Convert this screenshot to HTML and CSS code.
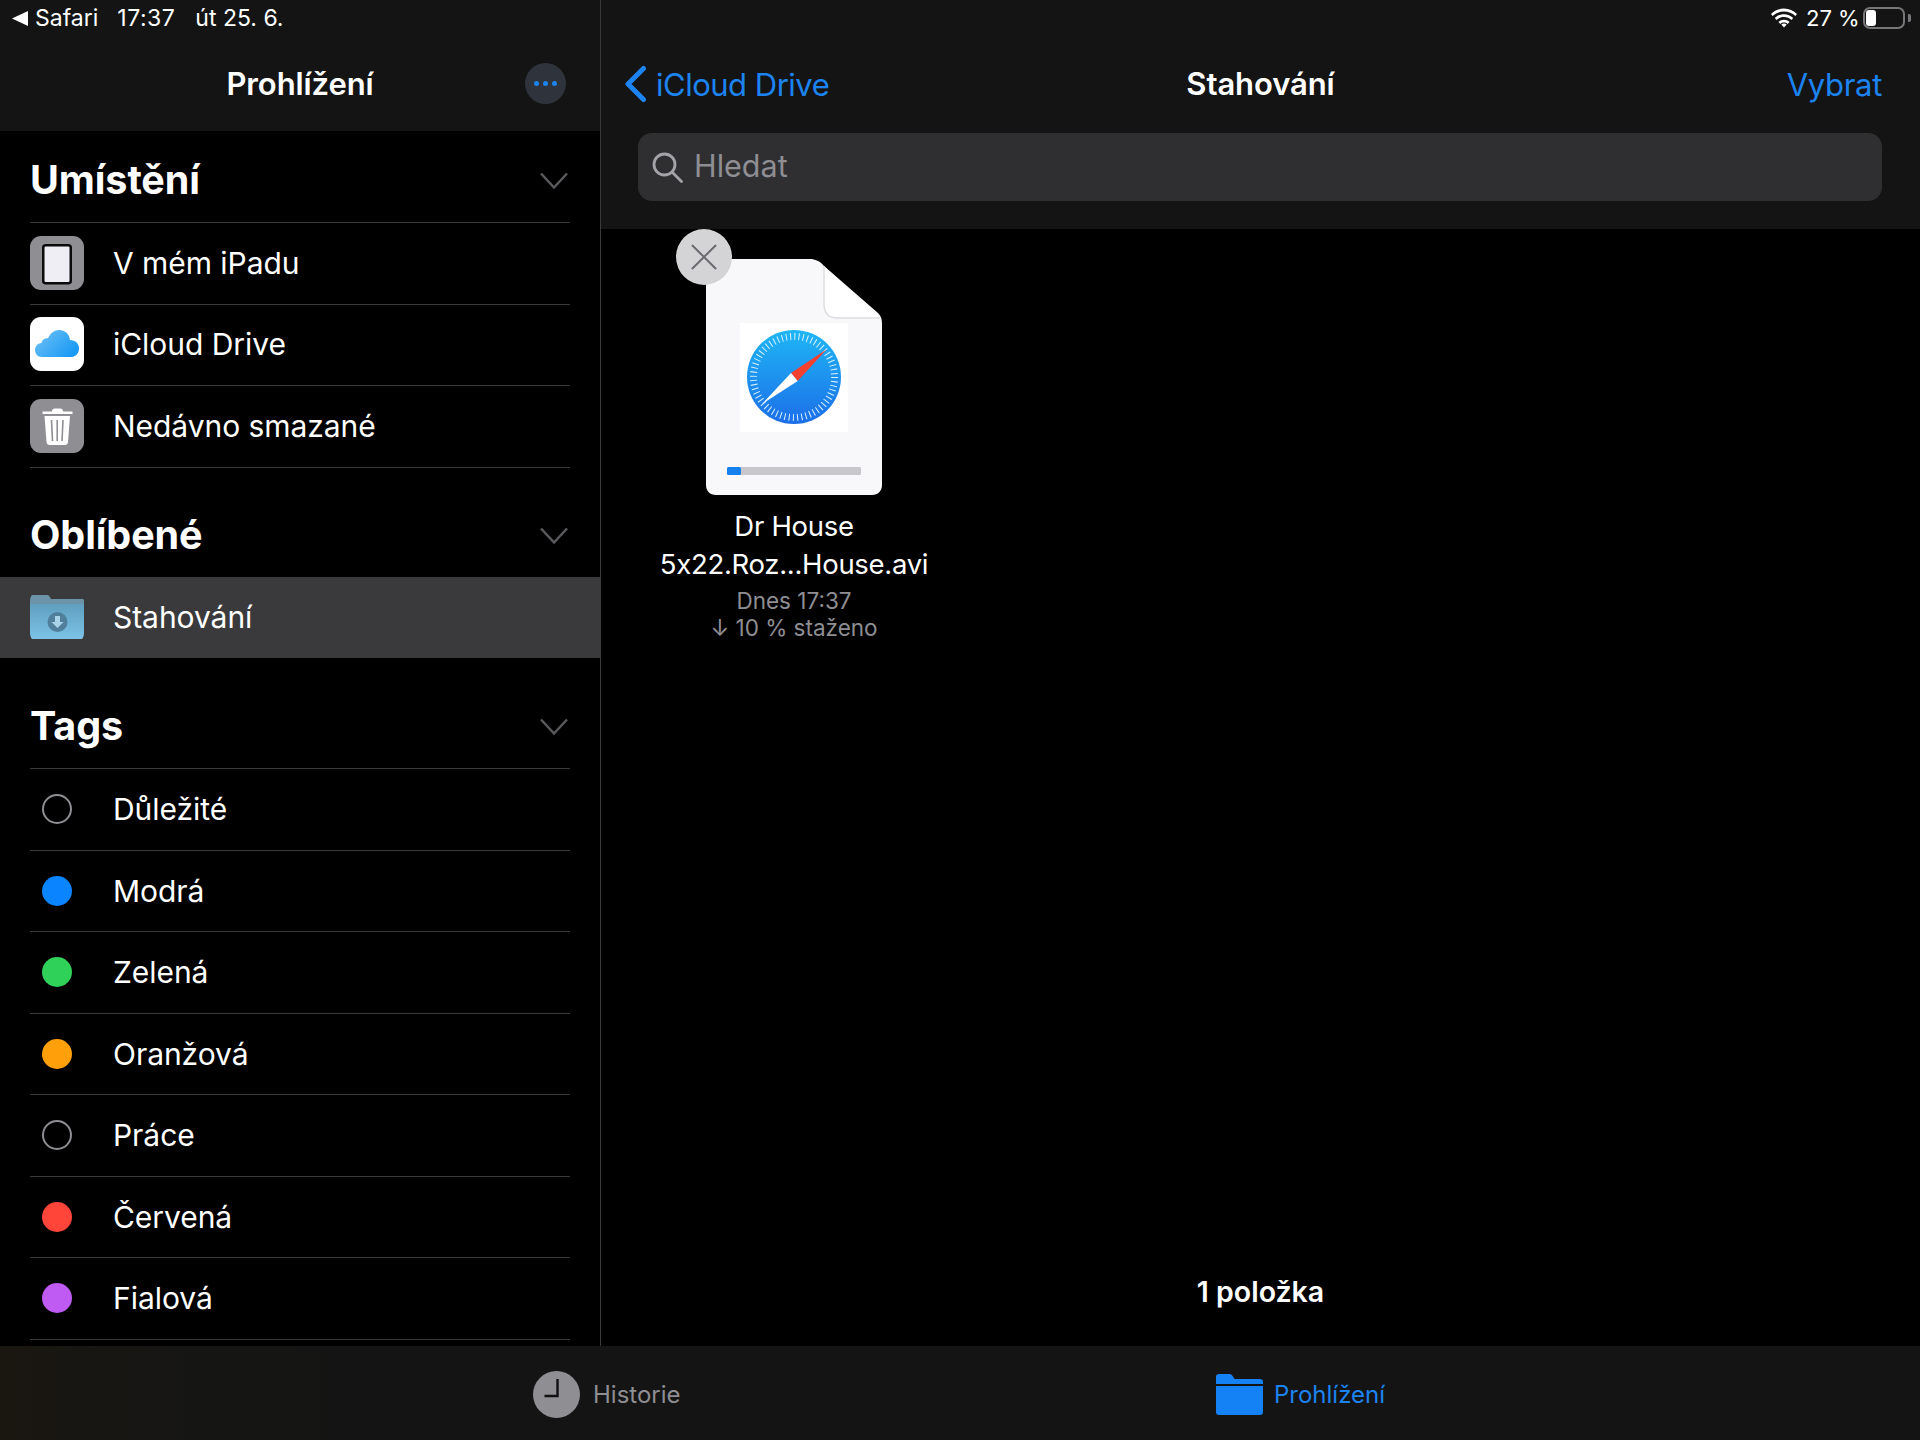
FILE: index.html
```html
<!DOCTYPE html>
<html lang="cs">
<head>
<meta charset="utf-8">
<title>Soubory</title>
<link rel="stylesheet" href="styles.css">
</head>
<body>
<div class="app">
  <div class="panes">
    <aside class="sidebar">
      <header class="side-head">
        <div class="status status-left">
          <svg class="back-tri" viewBox="0 0 16 15"><path d="M16 0v15L0 7.500z"/></svg>
          <span>Safari</span><span class="st-time">17:37</span><span class="st-date">út 25. 6.</span>
        </div>
        <div class="side-nav">
          <h1 class="nav-title">Prohlížení</h1>
          <button class="more"><i></i><i></i><i></i></button>
        </div>
      </header>

      <section class="group">
        <div class="group-head"><h2>Umístění</h2>
          <svg class="caret" viewBox="0 0 28 18"><path d="M1 1.500l13 14 13-14"/></svg></div>
        <div class="row row-place">
          <span class="ic ic-gray"><svg viewBox="0 0 54 54"><rect x="13.250" y="9.250" width="27.500" height="38" rx="2.500" fill="#eeeef4" stroke="#0a0a0a" stroke-width="2.500"/></svg></span>
          <span>V mém iPadu</span></div>
        <div class="row row-place">
          <span class="ic ic-white"><svg viewBox="0 0 54 54"><defs><linearGradient id="cl" x1="0" y1="0" x2="1" y2="0.6"><stop offset="0" stop-color="#74c3f5"/><stop offset="1" stop-color="#1b9bf5"/></linearGradient></defs><path d="M12 40c-4.600 0-7-3.400-7-7 0-3.800 2.800-6.800 6.500-7 .6-3.400 3.500-5.300 6.500-4.700C20.300 16 24.500 13 29 13c6 0 10.500 4.300 11 10 5 .1 9 3.300 9 8.400 0 5-3.600 8.600-8.500 8.600z" fill="url(#cl)"/></svg></span>
          <span>iCloud Drive</span></div>
        <div class="row row-place">
          <span class="ic ic-gray"><svg viewBox="0 0 54 54"><path d="M22 12.500c0-2 1-3 3-3h5c2 0 3 1 3 3h9.500v2.500h-30v-2.500z" fill="#fff"/><path d="M14.500 17h25.500l-2 26c-.2 2-1.300 3-3 3H19.500c-1.700 0-2.800-1-3-3z" fill="#fff"/><path d="M21.500 21l1 21M27.200 21v21M33 21l-1 21" stroke="#8e8e93" stroke-width="1.600"/></svg></span>
          <span>Nedávno smazané</span></div>
      </section>

      <section class="group">
        <div class="group-head"><h2>Oblíbené</h2>
          <svg class="caret" viewBox="0 0 28 18"><path d="M1 1.500l13 14 13-14"/></svg></div>
        <div class="row row-active">
          <span class="ic"><svg viewBox="0 0 54 54"><defs><linearGradient id="fd" x1="0" y1="0" x2="0" y2="1"><stop offset="0" stop-color="#5f9fbf"/><stop offset="1" stop-color="#7cc3e6"/></linearGradient></defs><path d="M0 7c0-1 .6-2 2-2h15c1 0 1.800 .4 2.500 1.500L21 9h31.500c1 0 1.500 .6 1.500 1.500V14H0z" fill="#6d93a8"/><path d="M0 14h54v32c0 1.200-.8 3-2 3H2c-1.200 0-2-1.800-2-3z" fill="url(#fd)"/><circle cx="27.500" cy="32" r="10" fill="#4f7f9b"/><path d="M25 26h5v6h3.500l-6 6-6-6H25z" fill="#a9d3e8"/></svg></span>
          <span>Stahování</span></div>
      </section>

      <section class="group">
        <div class="group-head"><h2>Tags</h2>
          <svg class="caret" viewBox="0 0 28 18"><path d="M1 1.500l13 14 13-14"/></svg></div>
        <div class="row"><span class="dot-wrap"><i class="dot dot-empty"></i></span><span>Důležité</span></div>
        <div class="row"><span class="dot-wrap"><i class="dot dot-blue"></i></span><span>Modrá</span></div>
        <div class="row"><span class="dot-wrap"><i class="dot dot-green"></i></span><span>Zelená</span></div>
        <div class="row"><span class="dot-wrap"><i class="dot dot-orange"></i></span><span>Oranžová</span></div>
        <div class="row"><span class="dot-wrap"><i class="dot dot-empty"></i></span><span>Práce</span></div>
        <div class="row"><span class="dot-wrap"><i class="dot dot-red"></i></span><span>Červená</span></div>
        <div class="row"><span class="dot-wrap"><i class="dot dot-purple"></i></span><span>Fialová</span></div>
      </section>
    </aside>

    <main class="main">
      <header class="main-head">
        <div class="status status-right">
          <svg class="wifi" viewBox="0 0 26 20"><path d="M13 3.500c4.400 0 8.400 1.700 11.300 4.500l1.700-2C22.600 2.700 18 .6 13 .6S3.400 2.700 0 6l1.700 2C4.600 5.200 8.600 3.500 13 3.500z"/><path d="M13 9c2.900 0 5.500 1.100 7.500 3l1.700-2C19.800 7.700 16.600 6.200 13 6.200S6.200 7.700 3.800 10l1.700 2c2-1.900 4.600-3 7.500-3z"/><path d="M13 14.500c1.400 0 2.700.5 3.700 1.400l1.800-2c-1.500-1.300-3.400-2.100-5.500-2.100s-4 .8-5.500 2.100l1.800 2c1-.9 2.300-1.400 3.700-1.400z"/><path d="M13 19.500l2.700-2.900c-.7-.6-1.700-1-2.700-1s-2 .4-2.700 1z"/></svg>
          <span class="pct">27 %</span>
          <span class="battery"><i></i></span><span class="nub"></span>
        </div>
        <div class="main-nav">
          <a class="back"><svg class="back-chev" viewBox="0 0 23 38"><path d="M19.500 3.500L4 19l15.500 15.500" /></svg><span>iCloud Drive</span></a>
          <h1 class="nav-title">Stahování</h1>
          <a class="select">Vybrat</a>
        </div>
        <div class="search">
          <svg class="search-ic" viewBox="0 0 31 31"><circle cx="12.500" cy="12.500" r="10.500"/><path d="M20.500 20.500l9 9"/></svg>
          <span class="search-text">Hledat</span>
        </div>
      </header>

      <div class="content">
        <div class="file">
          <div class="thumb">
            <svg class="page" viewBox="0 0 176 236">
              <path d="M10 0H104c5 0 10 2 14 7L172 54c3 3 4 6 4 11V226c0 6-4 10-10 10H10c-6 0-10-4-10-10V10C0 4 4 0 10 0z" fill="#f8f8fa"/>
              <path d="M118 7V45c0 9 5 14 14 14H174z" fill="#fff"/>
              <path d="M118 7V45c0 9 5 14 14 14H174" fill="none" stroke="#dedee2" stroke-width="1.500"/>
              <rect x="34" y="64" width="108" height="109" fill="#fff"/>
              <defs><linearGradient id="sf" x1="0" y1="0" x2="0" y2="1"><stop offset="0" stop-color="#1fb6f5"/><stop offset="1" stop-color="#1c6fe8"/></linearGradient></defs>
              <circle cx="88" cy="118" r="47" fill="url(#sf)"/>
              <circle cx="88" cy="118" r="40.500" fill="none" stroke="#d8f2fd" stroke-width="7" stroke-dasharray="1 3.242"/>
              <path d="M120.700 90.300L85 114l6.700 8z" fill="#f4402f"/>
              <path d="M55.700 145.300L85 114l6.700 8z" fill="#fff"/>
              <rect x="21" y="208" width="134" height="8" rx="1.500" fill="#c8c8cc"/>
              <rect x="21" y="208" width="14" height="8" rx="1.500" fill="#1580ee"/>
            </svg>
            <span class="close"><svg viewBox="0 0 28 28"><path d="M1 1l26 26M27 1L1 27"/></svg></span>
          </div>
          <div class="file-name">Dr House<br>5x22.Roz...House.avi</div>
          <div class="file-meta">Dnes 17:37<br><span class="arrow">↓</span> 10 % staženo</div>
        </div>
        <div class="count">1 položka</div>
      </div>
    </main>
  </div>

  <nav class="tabbar">
    <div class="tab tab-first">
      <svg class="clock" viewBox="0 0 47 47"><circle cx="23.500" cy="23.500" r="23.500" fill="#8e8e93"/><path d="M24.500 8v17h-13" fill="none" stroke="#111" stroke-width="2.400"/></svg>
      <span>Historie</span>
    </div>
    <div class="tab tab-on">
      <svg class="folder" viewBox="0 0 47 41"><path d="M0 3c0-2 1-3 3-3h10c1.500 0 2.500 .6 3.500 1.800L18.500 5H44c2 0 3 1 3 3v2H0z" fill="#1482f5"/><path d="M0 12h47v26c0 2-1 3-3 3H3c-2 0-3-1-3-3z" fill="#1482f5"/></svg>
      <span>Prohlížení</span>
    </div>
  </nav>
</div>
</body>
</html>
```
FILE: styles.css
```css
* { box-sizing: border-box; }
html, body { margin: 0; padding: 0; background: #000; }
body { font-family: Inter, "Liberation Sans", sans-serif; color: #fff; }
h1, h2 { margin: 0; }

.app { width: 1920px; height: 1440px; display: flex; flex-direction: column; overflow: hidden; }
.panes { flex: 1; display: flex; min-height: 0; }

/* sidebar */
.sidebar { width: 601px; flex: none; border-right: 1px solid #3a3a3c; display: flex; flex-direction: column; }
.side-head { height: 131px; background: #141414; flex: none; }
.status { height: 36px; display: flex; align-items: center; font-size: 23px; color: #fff; }
.status-left { padding-left: 12px; }
.back-tri { width: 16px; height: 15px; fill: #fff; margin-right: 7px; }
.st-time { margin-left: 19px; letter-spacing: .5px; }
.st-date { margin-left: 20px; }
.side-nav { height: 95px; display: grid; grid-template-columns: 1fr auto 1fr; align-items: center; }
.nav-title { grid-column: 2; font-size: 31px; font-weight: 600; letter-spacing: -0.1px; }
.more { grid-column: 3; justify-self: end; margin-right: 34px; width: 41px; height: 41px; border: 0; padding: 0; border-radius: 50%; background: #2f343c; display: flex; align-items: center; justify-content: center; gap: 4px; }
.more i { width: 5px; height: 5px; border-radius: 50%; background: #1c83f0; }

.group { margin-bottom: 19px; }
.group-head { height: 92px; margin: 0 30px; padding-top: 21.5px; display: flex; justify-content: space-between; align-items: flex-start; border-bottom: 1px solid #38383a; }
.group-head h2 { font-size: 39.500px; font-weight: 700; line-height: 54px; letter-spacing: -0.1px; }
.caret { width: 28px; height: 18px; margin-top: 19px; margin-right: 2px; fill: none; stroke: #5a5a5e; stroke-width: 2.500; }

.row { height: 81.5px; margin: 0 30px; display: flex; align-items: center; gap: 29px; font-size: 30px; border-bottom: 1px solid #38383a; letter-spacing: -0.05px; }
.row-place { padding-bottom: 1.500px; }
.row-active { margin: -2px 0 0; height: 81.5px; padding: 0 30px; background: #3a3a3c; border-bottom: 0; }
.ic { width: 54px; height: 54px; flex: none; border-radius: 11px; overflow: hidden; }
.ic svg { display: block; width: 54px; height: 54px; }
.ic-gray { background: #8e8e93; }
.ic-white { background: #fff; }
.dot-wrap { width: 54px; flex: none; display: flex; justify-content: center; }
.dot { width: 30px; height: 30px; border-radius: 50%; display: block; }
.dot-empty { border: 2px solid #8e8e93; }
.dot-blue { background: #0a84ff; }
.dot-green { background: #30d158; }
.dot-orange { background: #ff9f0a; }
.dot-red { background: #ff453a; }
.dot-purple { background: #bf5af2; }

/* main */
.main { flex: 1; min-width: 0; display: flex; flex-direction: column; }
.main-head { height: 229px; background: #141414; flex: none; padding-bottom: 28px; display: flex; flex-direction: column; }
.status-right { justify-content: flex-end; padding-right: 9px; }
.wifi { width: 26px; height: 20px; fill: #fff; margin-right: 9px; }
.pct { width: 50px; white-space: nowrap; font-size: 22px; }
.battery { width: 42px; height: 22px; border: 2px solid #77777a; border-radius: 7px; padding: 1px; margin-left: 7px; display: block; }
.battery i { display: block; width: 10px; height: 16px; background: #fff; border-radius: 3px; }
.nub { width: 3px; height: 8px; background: #77777a; margin-left: 3px; border-radius: 0 2px 2px 0; }
.main-nav { height: 95px; margin-bottom: 2px; display: grid; grid-template-columns: 1fr auto 1fr; align-items: center; font-size: 31px; color: #1c83f0; }
.main-nav .nav-title { color: #fff; }
.back { display: flex; align-items: center; gap: 9px; margin-left: 23px; letter-spacing: -0.5px; padding-top: 1px; }
.back-chev { width: 23px; height: 38px; fill: none; stroke: #1c83f0; stroke-width: 5; stroke-linecap: round; stroke-linejoin: round; }
.select { justify-self: end; margin-right: 38px; letter-spacing: -0.3px; padding-top: 1px; }
.search { flex: 1; margin: 0 38px 0 37px; background: #2f2f31; border-radius: 14px; display: flex; align-items: center; padding-left: 14px; gap: 11px; font-size: 30.500px; color: #8e8e93; }
.search-ic { width: 31px; height: 31px; fill: none; stroke: #a4a4a8; stroke-width: 2.800; stroke-linecap: round; }
.search-text { padding-bottom: 4px; }

.content { flex: 1; display: flex; flex-direction: column; align-items: flex-start; padding-bottom: 37px; justify-content: space-between; }
.file { margin: 30px 0 0 43px; width: 300px; display: flex; flex-direction: column; align-items: center; text-align: center; }
.thumb { position: relative; width: 176px; height: 236px; }
.page { display: block; width: 176px; height: 236px; }
.close { position: absolute; left: -30px; top: -30px; width: 56px; height: 56px; border-radius: 50%; background: #d4d4d6; display: flex; align-items: center; justify-content: center; }
.close svg { width: 26px; height: 26px; fill: none; stroke: #6c6c70; stroke-width: 2.200; }
.file-name { margin-top: 12px; font-size: 27.500px; line-height: 38px; letter-spacing: -0.3px; }
.file-meta { margin-top: 4px; font-size: 22.500px; line-height: 27px; color: #8e8e93; }
.count { align-self: center; font-size: 28.500px; font-weight: 600; }

/* tab bar */
.tabbar { height: 94px; flex: none; display: flex; padding: 25px 0 0 533px; align-items: flex-start; background: linear-gradient(90deg, #1a1711 0, #151514 200px, #141414 400px); }
.tab { display: flex; align-items: center; gap: 13px; height: 47px; font-size: 24px; color: #8e8e93; }
.tab-first { width: 683px; }
.tab-on { color: #1c83f0; gap: 11px; }
.clock { width: 47px; height: 47px; }
.folder { width: 47px; height: 41px; }
```
